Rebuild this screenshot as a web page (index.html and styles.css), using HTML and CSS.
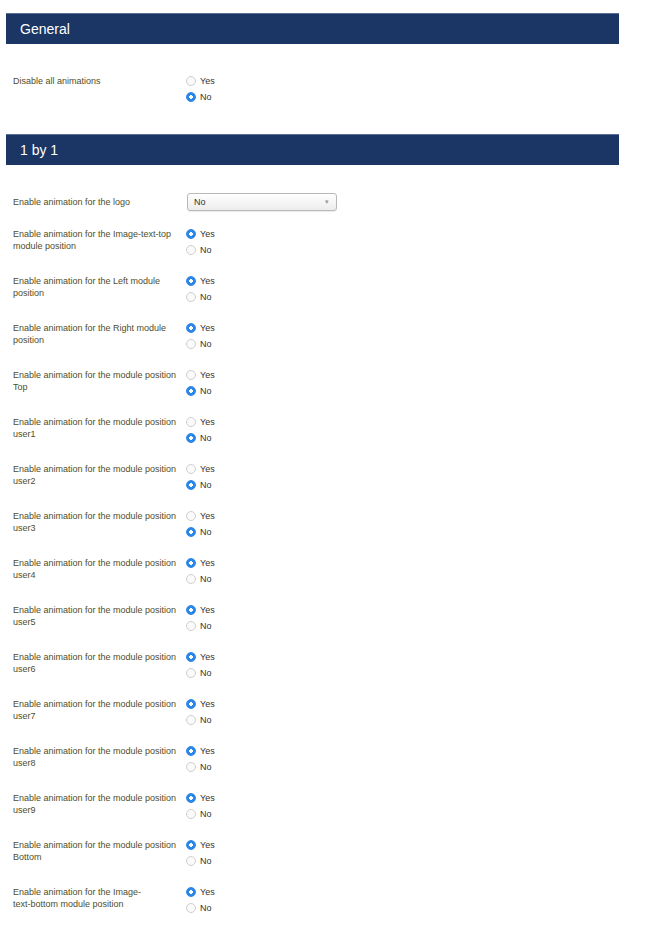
FILE: index.html
```html
<!DOCTYPE html>
<html lang="en">
<head>
    <meta charset="UTF-8">
    <meta name="viewport" content="width=device-width, initial-scale=1.0">
    <title>Animation settings</title>
    <link rel="stylesheet" href="styles.css">
</head>
<body>

    <!-- General -->
    <div class="section">
        <h2 class="section-title">General</h2>
        <div class="fields">
            <div class="field">
                <label class="field-label">Disable all animations</label>
                <div class="radios">
                    <label class="radio"><input type="radio" name="disable_all"> Yes</label>
                    <label class="radio"><input type="radio" name="disable_all" checked> No</label>
                </div>
            </div>
        </div>
    </div>

    <!-- 1 by 1 -->
    <div class="section">
        <h2 class="section-title">1 by 1</h2>
        <div class="fields fields-compact">
            <div class="field field-select">
                <label class="field-label" for="logo">Enable animation for the logo</label>
                <div class="select-wrap">
                    <select id="logo" class="select">
                        <option>No</option>
                        <option>Yes</option>
                    </select>
                </div>
            </div>

            <div class="field">
                <label class="field-label">Enable animation for the Image-text-top module position</label>
                <div class="radios">
                    <label class="radio"><input type="radio" name="image_top" checked> Yes</label>
                    <label class="radio"><input type="radio" name="image_top"> No</label>
                </div>
            </div>

            <div class="field">
                <label class="field-label">Enable animation for the Left module position</label>
                <div class="radios">
                    <label class="radio"><input type="radio" name="left" checked> Yes</label>
                    <label class="radio"><input type="radio" name="left"> No</label>
                </div>
            </div>

            <div class="field">
                <label class="field-label">Enable animation for the Right module position</label>
                <div class="radios">
                    <label class="radio"><input type="radio" name="right" checked> Yes</label>
                    <label class="radio"><input type="radio" name="right"> No</label>
                </div>
            </div>

            <div class="field">
                <label class="field-label">Enable animation for the module position Top</label>
                <div class="radios">
                    <label class="radio"><input type="radio" name="top"> Yes</label>
                    <label class="radio"><input type="radio" name="top" checked> No</label>
                </div>
            </div>

            <div class="field">
                <label class="field-label">Enable animation for the module position user1</label>
                <div class="radios">
                    <label class="radio"><input type="radio" name="user1"> Yes</label>
                    <label class="radio"><input type="radio" name="user1" checked> No</label>
                </div>
            </div>

            <div class="field">
                <label class="field-label">Enable animation for the module position user2</label>
                <div class="radios">
                    <label class="radio"><input type="radio" name="user2"> Yes</label>
                    <label class="radio"><input type="radio" name="user2" checked> No</label>
                </div>
            </div>

            <div class="field">
                <label class="field-label">Enable animation for the module position user3</label>
                <div class="radios">
                    <label class="radio"><input type="radio" name="user3"> Yes</label>
                    <label class="radio"><input type="radio" name="user3" checked> No</label>
                </div>
            </div>

            <div class="field">
                <label class="field-label">Enable animation for the module position user4</label>
                <div class="radios">
                    <label class="radio"><input type="radio" name="user4" checked> Yes</label>
                    <label class="radio"><input type="radio" name="user4"> No</label>
                </div>
            </div>

            <div class="field">
                <label class="field-label">Enable animation for the module position user5</label>
                <div class="radios">
                    <label class="radio"><input type="radio" name="user5" checked> Yes</label>
                    <label class="radio"><input type="radio" name="user5"> No</label>
                </div>
            </div>

            <div class="field">
                <label class="field-label">Enable animation for the module position user6</label>
                <div class="radios">
                    <label class="radio"><input type="radio" name="user6" checked> Yes</label>
                    <label class="radio"><input type="radio" name="user6"> No</label>
                </div>
            </div>

            <div class="field">
                <label class="field-label">Enable animation for the module position user7</label>
                <div class="radios">
                    <label class="radio"><input type="radio" name="user7" checked> Yes</label>
                    <label class="radio"><input type="radio" name="user7"> No</label>
                </div>
            </div>

            <div class="field">
                <label class="field-label">Enable animation for the module position user8</label>
                <div class="radios">
                    <label class="radio"><input type="radio" name="user8" checked> Yes</label>
                    <label class="radio"><input type="radio" name="user8"> No</label>
                </div>
            </div>

            <div class="field">
                <label class="field-label">Enable animation for the module position user9</label>
                <div class="radios">
                    <label class="radio"><input type="radio" name="user9" checked> Yes</label>
                    <label class="radio"><input type="radio" name="user9"> No</label>
                </div>
            </div>

            <div class="field">
                <label class="field-label">Enable animation for the module position Bottom</label>
                <div class="radios">
                    <label class="radio"><input type="radio" name="bottom" checked> Yes</label>
                    <label class="radio"><input type="radio" name="bottom"> No</label>
                </div>
            </div>

            <div class="field">
                <label class="field-label">Enable animation for the Image-<span class="nowrap">text-bottom</span> module position</label>
                <div class="radios">
                    <label class="radio"><input type="radio" name="image_bottom" checked> Yes</label>
                    <label class="radio"><input type="radio" name="image_bottom"> No</label>
                </div>
            </div>
        </div>
    </div>

</body>
</html>
```

FILE: styles.css
```css
body {
    margin: 0;
    padding: 13px 0 0 6px;
    font-family: "Liberation Sans", Arial, sans-serif;
    background: #fff;
}

.section {
    width: 613px;
}

.section-title {
    margin: 0;
    height: 31px;
    padding-left: 14px;
    display: flex;
    align-items: center;
    font-size: 14px;
    font-weight: normal;
    color: #fff;
    background-color: #1b3564;
    border-top: 1px solid #5a6f95;
    box-sizing: border-box;
}

/* bloque de campos */
.fields {
    padding: 29px 0 29px 7px;
}

.fields-compact {
    padding-top: 28px;
}

.field {
    display: flex;
    align-items: flex-start;
    margin-bottom: 15px;
}

    .field:last-child {
        margin-bottom: 0;
    }

.field-label {
    width: 173px;
    flex-shrink: 0;
    padding-top: 2px;
    font-size: 9px;
    line-height: 12px;
    color: #4f4d2a;
}

.nowrap {
    white-space: nowrap;
}

.field-select {
    align-items: center;
}

    .field-select .field-label {
        padding-top: 0;
    }

.radios {
    display: flex;
    flex-direction: column;
}

.radio {
    display: flex;
    align-items: center;
    gap: 4px;
    height: 16px;
    font-size: 9px;
    color: #333;
}

    .radio input {
        appearance: none;
        -webkit-appearance: none;
        margin: 0 0 0 0;
        width: 10px;
        height: 10px;
        border: 1px solid #cfcfcf;
        border-radius: 50%;
        background: #fafafa;
        box-sizing: border-box;
    }

        .radio input:checked {
            border-color: #2a86e8;
            background: radial-gradient(circle, #fff 0 1.6px, #2a86e8 2px);
        }

/* selector */
.select-wrap {
    position: relative;
    width: 150px;
    margin-left: 1px;
}

    .select-wrap::after {
        content: "\25BE";
        position: absolute;
        right: 8px;
        top: 0;
        line-height: 18px;
        font-size: 7px;
        color: #999;
    }

.select {
    appearance: none;
    -webkit-appearance: none;
    display: block;
    width: 100%;
    height: 18px;
    padding: 0 6px;
    font-family: "Liberation Sans", Arial, sans-serif;
    font-size: 9px;
    color: #333;
    border: 1px solid #b9b9b9;
    border-radius: 3px;
    background: linear-gradient(#fff, #ececec);
    box-shadow: 0 1px 1px rgba(0, 0, 0, 0.08);
}
```
